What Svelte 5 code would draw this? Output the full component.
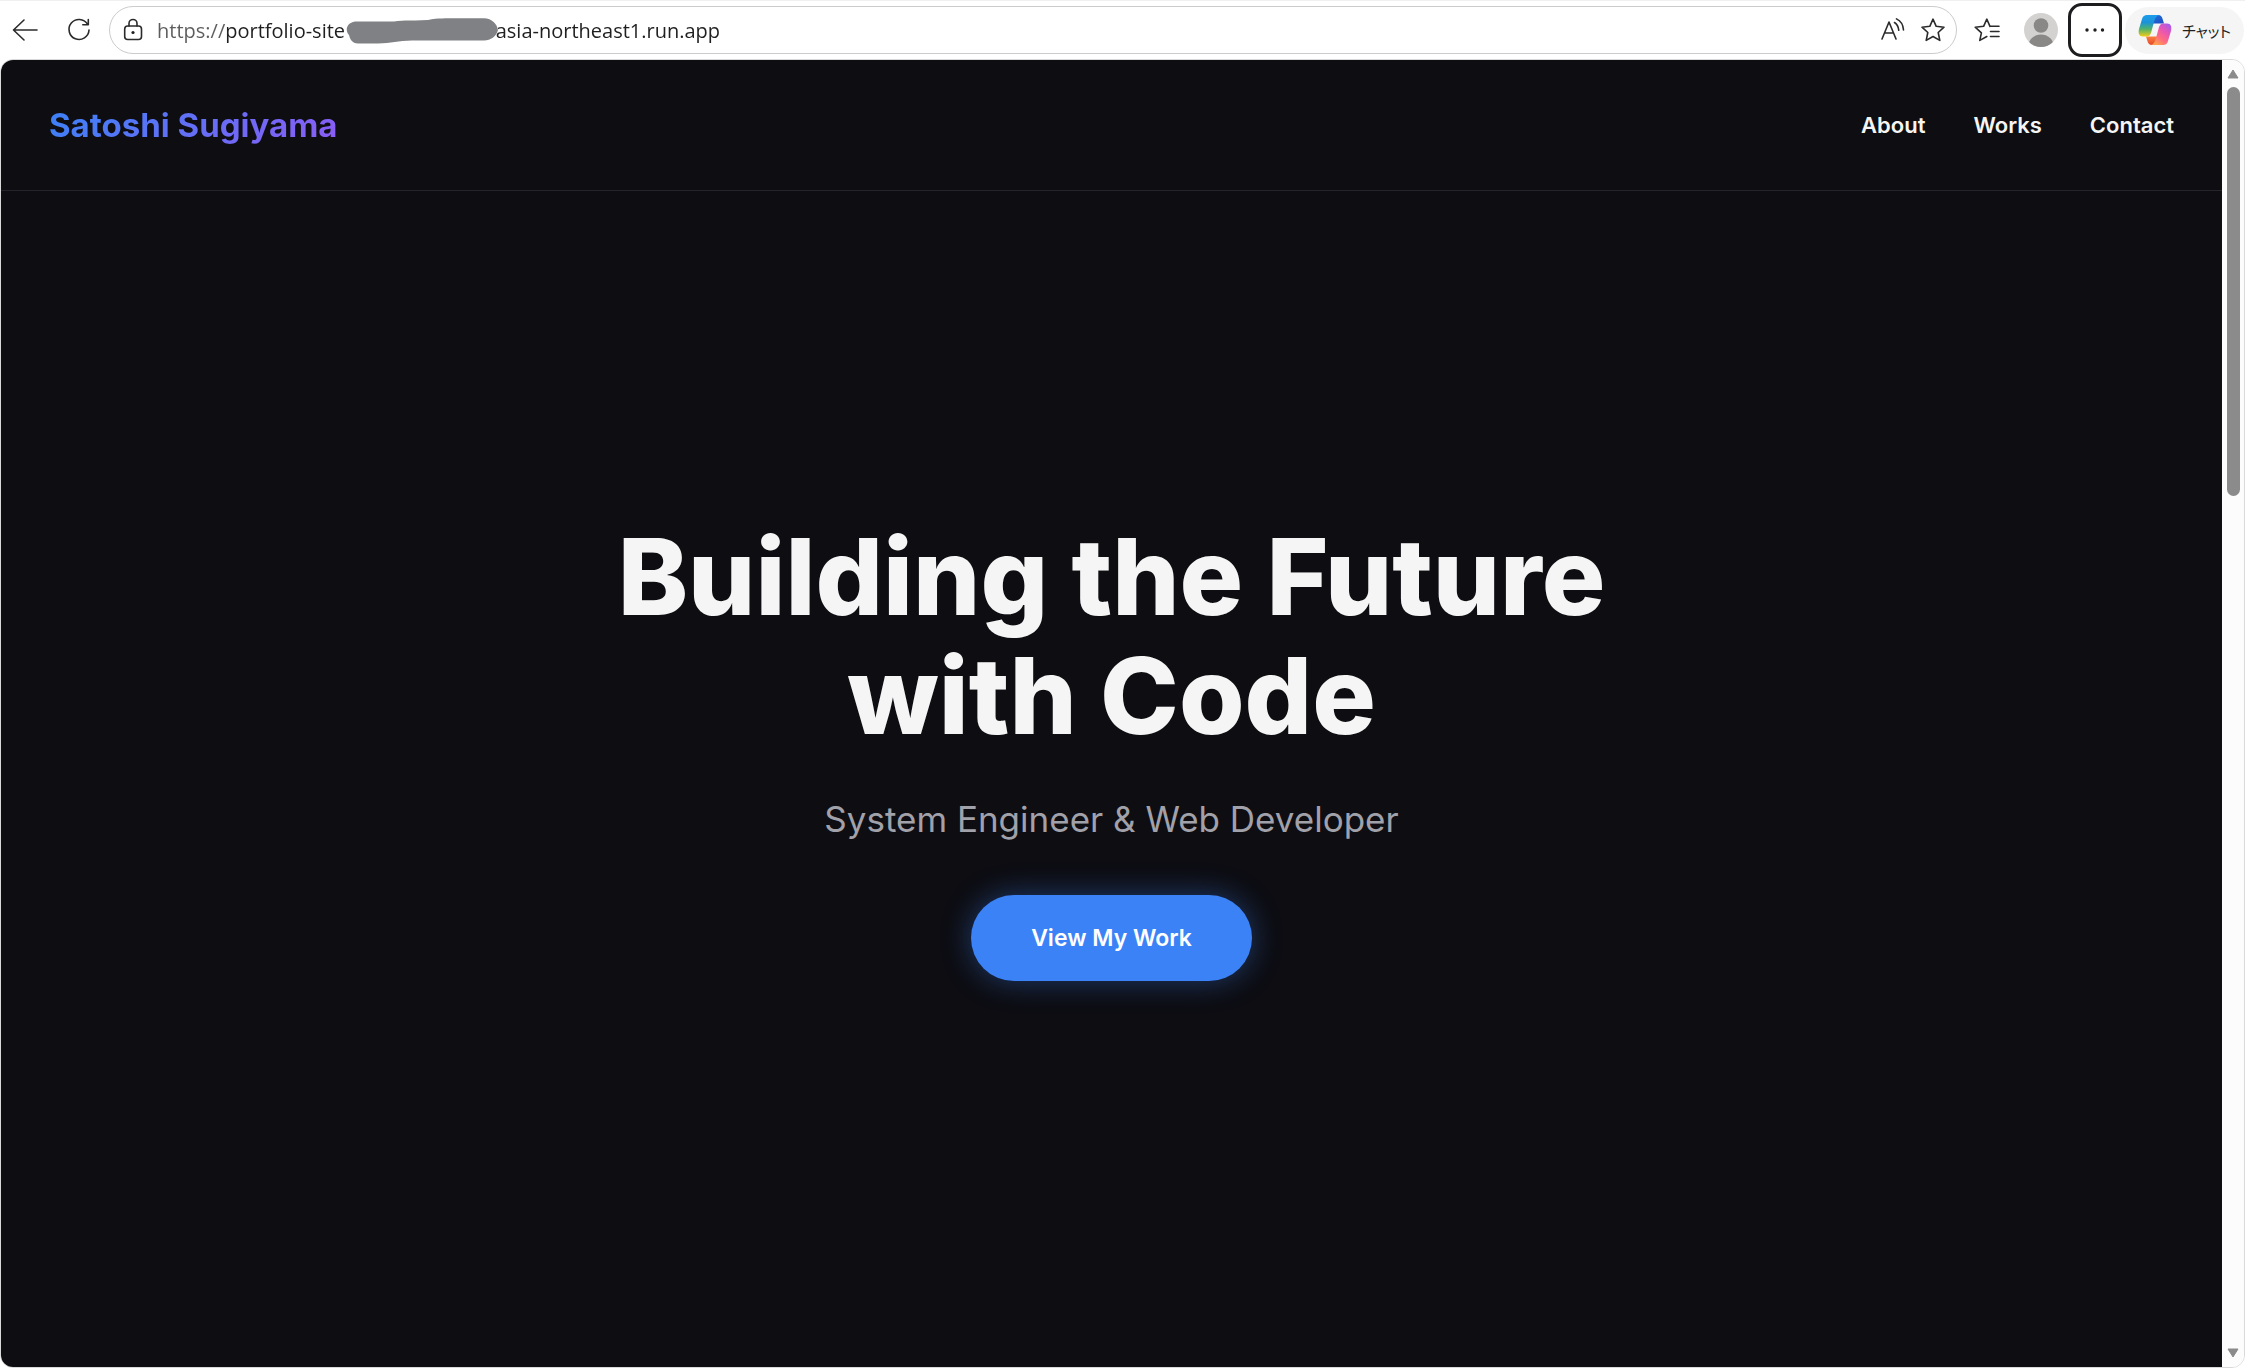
<script lang="ts">
	let address = $state('https://portfolio-site' + '\u00a0'.repeat(29) + 'asia-northeast1.run.app');

	const links = [
		{ label: 'About', href: '#about' },
		{ label: 'Works', href: '#works' },
		{ label: 'Contact', href: '#contact' }
	];
</script>

<div class="browser">
	<div class="toolbar">
		<button type="button" class="tool" aria-label="Back">
			<svg width="26" height="24" viewBox="0 0 26 24">
				<path d="M12 2 1.500 12 12 22M1.500 12H25" />
			</svg>
		</button>
		<button type="button" class="tool" aria-label="Reload">
			<svg width="24" height="24" viewBox="0 0 24 24">
				<path d="M20.500 6.200A10 10 0 1 0 22 12M21.300 1.500V6.700H15.800" />
			</svg>
		</button>

		<form class="address" onsubmit={(e) => e.preventDefault()}>
			<button type="button" class="inner" aria-label="Site information">
				<svg width="24" height="24" viewBox="0 0 24 24">
					<rect x="3.700" y="8" width="16.800" height="13.500" rx="3" />
					<path d="M8 8V5.500a4 4 0 0 1 8 0V8" />
					<circle class="solid" cx="12" cy="14.500" r="1.600" />
				</svg>
			</button>
			<div class="url">
				<input type="text" aria-label="Address" spellcheck="false" bind:value={address} />
				<svg class="scribble" width="152" height="26" viewBox="0 0 152 26">
					<path
						d="M9 3.500H48C58 1.500 68 3 82 2C92 0 100 .5 110 .3H138C146 .5 151 6 152 12C150 19 145 22 138 22.500H66C52 22.500 45 25.500 32 25.500H12C6 25.500 4 21 3 17C-1 13 0 5 9 3.500Z"
					/>
				</svg>
			</div>
			<div class="actions">
				<button type="button" class="inner" aria-label="Read aloud">
					<svg width="24" height="24" viewBox="0 0 24 24">
						<path
							d="M1 21 8 4 15 21M3.500 15H12.500M13.500 4.500Q17.300 7 17.800 12.300M15.500 .9Q22 4 22.500 12"
						/>
					</svg>
				</button>
				<button type="button" class="inner" aria-label="Add to favorites">
					<svg width="24" height="24" viewBox="0 0 24 24">
						<path
							d="M12 1.200 15.200 8.300 23 9.200 17.200 14.500 18.800 22.400 12 18.500 5.200 22.400 6.800 14.500 1 9.200 8.800 8.300Z"
						/>
					</svg>
				</button>
			</div>
		</form>

		<button type="button" class="tool" aria-label="Favorites">
			<svg width="26" height="24" viewBox="0 0 26 24">
				<path
					d="M16 8.300 12.800 1.200 9.600 8.300 1.200 9.200 7.400 14.800 5.800 22.400 12.800 18.500M16 8.300H25M16.500 13.500H25M16.500 18.500H25"
				/>
			</svg>
		</button>
		<button type="button" class="tool" aria-label="Profile">
			<svg class="avatar" width="34" height="34" viewBox="0 0 34 34">
				<defs>
					<clipPath id="avatar-clip"><circle cx="17" cy="17" r="17" /></clipPath>
				</defs>
				<g clip-path="url(#avatar-clip)">
					<rect width="34" height="34" fill="#d4d2d0" />
					<circle cx="17" cy="12.500" r="7.300" fill="#8a8886" />
					<ellipse cx="17" cy="33" rx="12.500" ry="11.500" fill="#8a8886" />
				</g>
			</svg>
		</button>
		<button type="button" class="tool more" aria-label="Settings and more">
			<svg width="24" height="24" viewBox="0 0 24 24">
				<circle class="solid" cx="4" cy="12" r="1.700" />
				<circle class="solid" cx="12" cy="12" r="1.700" />
				<circle class="solid" cx="19.500" cy="12" r="1.700" />
			</svg>
		</button>
		<button type="button" class="chat">
			<svg class="copilot" width="34" height="32" viewBox="0 0 34 32">
				<defs>
					<linearGradient id="cp-left" x1="0" y1="0" x2="0" y2="1">
						<stop offset="0" stop-color="#1c9cec" />
						<stop offset=".35" stop-color="#1b93d8" />
						<stop offset=".65" stop-color="#4fb26c" />
						<stop offset="1" stop-color="#f3cc16" />
					</linearGradient>
					<linearGradient id="cp-right" x1="1" y1="0" x2=".3" y2="1">
						<stop offset="0" stop-color="#9a5cf2" />
						<stop offset=".4" stop-color="#e756b4" />
						<stop offset=".7" stop-color="#ff6a82" />
						<stop offset="1" stop-color="#ffa04c" />
					</linearGradient>
					<linearGradient id="cp-top" x1="0" y1="0" x2="1" y2="1">
						<stop offset="0" stop-color="#1a7be0" />
						<stop offset="1" stop-color="#2149c0" />
					</linearGradient>
					<linearGradient id="cp-bottom" x1="0" y1="0" x2="0" y2="1">
						<stop offset="0" stop-color="#f7813c" />
						<stop offset="1" stop-color="#e8472f" />
					</linearGradient>
				</defs>
				<path
					fill="url(#cp-top)"
					d="M12 1H20C23 1 24 3 24.600 5L26 9.500H15L13 6Z"
				/>
				<path
					fill="url(#cp-bottom)"
					d="M22 31H14C11 31 10 29 9.400 27L8 22.500H19L21 26Z"
				/>
				<path
					fill="url(#cp-left)"
					d="M9 1H21C18.500 1.500 17 4 16 8L13 19C12 21.500 11 22.500 8 22.500H5C1 22.500 0 19 1 15L4 5C5 2 6.500 1 9 1Z"
				/>
				<path
					fill="url(#cp-right)"
					d="M25 31H13C15.500 30.500 17 28 18 24L21 13C22 10.500 23 9.500 26 9.500H29C33 9.500 34 13 33 17L30 27C29 30 27.500 31 25 31Z"
				/>
			</svg>
			<span>チャット</span>
		</button>
	</div>

	<div class="viewport">
		<div class="site">
			<header>
				<a class="logo" href="#top">Satoshi Sugiyama</a>
				<nav>
					{#each links as link}
						<a href={link.href}>{link.label}</a>
					{/each}
				</nav>
			</header>

			<main class="hero">
				<h1>Building the Future<br />with Code</h1>
				<p>System Engineer &amp; Web Developer</p>
				<a class="cta" href="#works">View My Work</a>
			</main>
		</div>

		<div class="scrollbar" aria-hidden="true">
			<svg width="12" height="10" viewBox="0 0 12 10"><path d="M6 1 11 9H1Z" /></svg>
			<div class="track"><div class="thumb"></div></div>
			<svg width="12" height="10" viewBox="0 0 12 10"><path d="M6 9 11 1H1Z" /></svg>
		</div>
	</div>
</div>

<style>
	:global(body) {
		margin: 0;
		background: #ffffff;
	}

	.browser {
		display: flex;
		flex-direction: column;
		min-height: 100vh;
		font-family: 'Inter', sans-serif;
	}

	/* Browser toolbar */
	.toolbar {
		display: flex;
		align-items: center;
		gap: 6px;
		height: 59px;
		padding: 0 1px;
		box-sizing: border-box;
		border-top: 1px solid #f0f0f0;
	}

	.toolbar button {
		display: flex;
		align-items: center;
		justify-content: center;
		flex: none;
		padding: 0;
		border: none;
		background: none;
		cursor: pointer;
	}

	.toolbar svg {
		fill: none;
		stroke: #2b2b2b;
		stroke-width: 1.6;
		stroke-linecap: round;
		stroke-linejoin: round;
	}

	.toolbar .solid {
		fill: #1f1f1f;
		stroke: none;
	}

	.toolbar .avatar,
	.toolbar .copilot {
		stroke: none;
	}

	.toolbar .tool {
		width: 48px;
		height: 48px;
	}

	.toolbar .more {
		border-radius: 11px;
		outline: 3px solid #1d1d1f;
	}

	.toolbar .inner {
		width: 24px;
		height: 24px;
	}

	.toolbar .chat {
		gap: 10px;
		width: 119px;
		height: 47px;
		border-radius: 24px;
		background: #f5f5f5;
		font-family: 'Noto Sans CJK JP', sans-serif;
		font-size: 15px;
		font-feature-settings: 'palt';
		color: #1f1f1f;
	}

	.address {
		display: flex;
		align-items: center;
		gap: 12px;
		flex: 1;
		height: 48px;
		padding: 0 11px;
		box-sizing: border-box;
		border: 1px solid #cccccc;
		border-radius: 24px;
	}

	.url {
		position: relative;
		flex: 1;
	}

	.url input {
		display: block;
		width: 100%;
		height: 30px;
		padding: 0;
		border: none;
		outline: none;
		font-family: 'Open Sans', sans-serif;
		font-size: 20px;
		color: transparent;
		caret-color: #1f1f1f;
		/* scheme is dimmer than the host */
		background: linear-gradient(90deg, #5c5c5c 69px, #1f1f1f 69px);
		background-clip: text;
	}

	.toolbar .scribble {
		position: absolute;
		top: 3px;
		left: 189px;
		fill: #808184;
		stroke: none;
	}

	.actions {
		display: flex;
		gap: 16px;
	}

	/* Page */
	.viewport {
		display: flex;
		flex: 1;
		overflow: hidden;
		border: 1px solid #d9d9d9;
		border-radius: 13px;
	}

	.site {
		display: flex;
		flex-direction: column;
		flex: 1;
		background: #0d0d12;
	}

	header {
		display: flex;
		align-items: center;
		justify-content: space-between;
		height: 130px;
		padding: 0 48px;
		border-bottom: 1px solid #24242a;
	}

	.logo {
		font-size: 33px;
		font-weight: 700;
		text-decoration: none;
		color: transparent;
		background: linear-gradient(135deg, #3b82f6, #8b5cf6);
		background-clip: text;
	}

	nav {
		display: flex;
		gap: 48px;
	}

	nav a {
		font-size: 22px;
		font-weight: 600;
		text-decoration: none;
		color: #f5f5f5;
	}

	.hero {
		display: flex;
		flex-direction: column;
		align-items: center;
		justify-content: center;
		flex: 1;
		padding-bottom: 60px;
		text-align: center;
	}

	h1 {
		margin: 0 0 36px;
		font-size: 106px;
		font-weight: 800;
		line-height: 119px;
		color: #f5f5f5;
	}

	.hero p {
		margin: 0 0 48px;
		font-size: 35px;
		line-height: 56px;
		color: #a1a1aa;
	}

	.cta {
		padding: 24px 60px;
		border-radius: 48px;
		font-size: 23px;
		font-weight: 600;
		line-height: 38px;
		text-decoration: none;
		color: #ffffff;
		background: #3b82f6;
		box-shadow: 0 0 30px rgba(59, 130, 246, 0.4);
	}

	/* Scrollbar */
	.scrollbar {
		display: flex;
		flex-direction: column;
		align-items: center;
		gap: 8px;
		width: 22px;
		padding: 9px 0;
		background: #fcfcfc;
	}

	.scrollbar svg {
		flex: none;
		fill: #8b8b8b;
		stroke: #8b8b8b;
		stroke-linejoin: round;
	}

	.track {
		flex: 1;
		width: 13px;
	}

	.thumb {
		height: 409px;
		border-radius: 7px;
		background: #8b8b8b;
	}
</style>
